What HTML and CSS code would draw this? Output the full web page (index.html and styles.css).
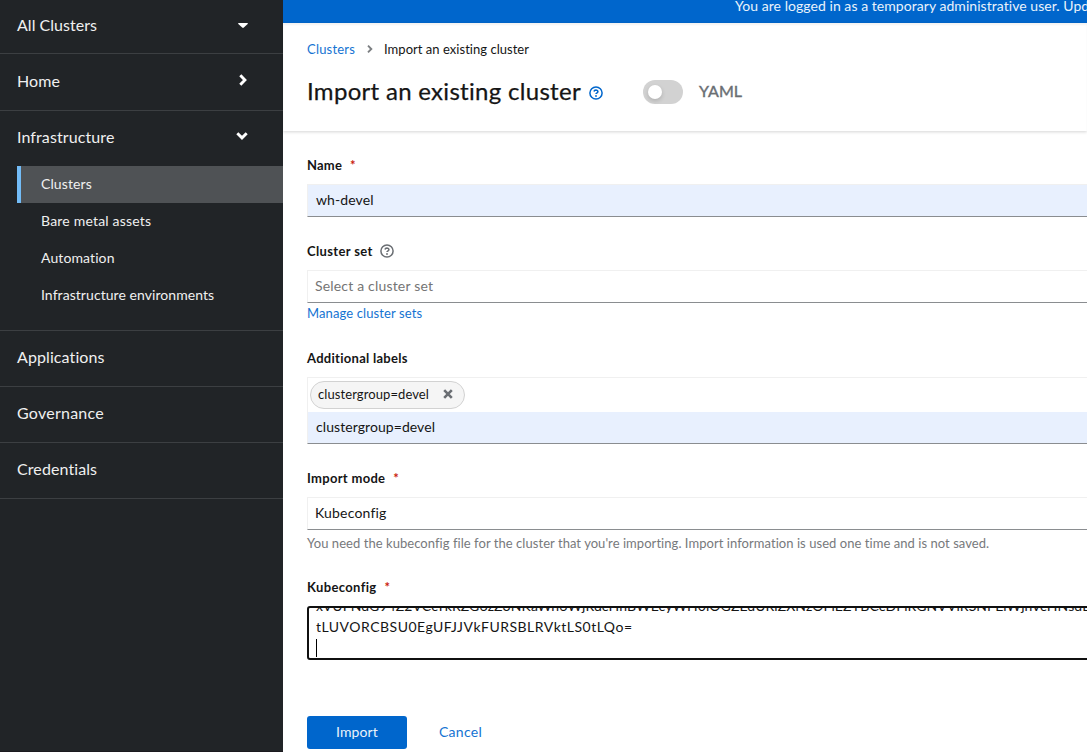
FILE: index.html
```html
<!DOCTYPE html>
<html lang="en">
<head>
<meta charset="utf-8">
<title>Import an existing cluster</title>
<link rel="stylesheet" href="styles.css">
</head>
<body>
<div class="page">
  <nav class="sidebar">
    <div class="nav-item switcher"><span>All Clusters</span>
      <svg class="icon" width="10" height="5" viewBox="0 0 10 5"><path d="M.7 0h8.6q.9.2.4.9L5.8 4.6q-.8.7-1.6 0L.3.9Q-.2.2.7 0z" fill="currentColor"/></svg>
    </div>
    <div class="nav-item home"><span>Home</span>
      <svg class="icon icon-right" width="8" height="12" viewBox="0 0 8 12"><path d="M1.3 1.3 5.9 6l-4.6 4.7" fill="none" stroke="currentColor" stroke-width="2.9"/></svg>
    </div>
    <div class="nav-group">
      <div class="nav-item nav-head"><span>Infrastructure</span>
        <svg class="icon icon-down" width="12" height="8" viewBox="0 0 12 8"><path d="M1.3 1.3 6 5.9l4.7-4.6" fill="none" stroke="currentColor" stroke-width="2.9"/></svg>
      </div>
      <a class="sub current">Clusters</a>
      <a class="sub s-bare">Bare metal assets</a>
      <a class="sub">Automation</a>
      <a class="sub s-env">Infrastructure environments</a>
    </div>
    <div class="nav-item">Applications</div>
    <div class="nav-item governance">Governance</div>
    <div class="nav-item">Credentials</div>
  </nav>
  <main class="main">
    <div class="banner"><span>You are logged in as a temporary administrative user. Update the cluster OAuth configuration to allow others to log in.</span></div>
    <header class="header">
      <div class="breadcrumb">
        <a class="link crumb">Clusters</a>
        <svg width="6" height="8" viewBox="0 0 6 8"><path d="M1 .7 4.3 4 1 7.3" fill="none" stroke="#7c7f82" stroke-width="1.9"/></svg>
        <span>Import an existing cluster</span>
      </div>
      <div class="title-row">
        <h1>Import an existing cluster</h1>
        <svg class="help help-blue" width="14" height="14" viewBox="0 0 14 14"><circle cx="7" cy="7" r="6.1" fill="none" stroke="currentColor" stroke-width="1.5"/><path d="M5 5.5Q5.3 4 7 4q1.9.1 1.9 1.6 0 1-1.1 1.5-.8.4-.8 1" fill="none" stroke="currentColor" stroke-width="1.6"/><circle cx="7" cy="10" r=".9" fill="currentColor"/></svg>
        <span class="switch"><span class="knob"></span></span>
        <span class="yaml">YAML</span>
      </div>
    </header>
    <form class="form">
      <div class="label">Name<span class="req">*</span></div>
      <div class="input filled">wh-devel</div>

      <div class="label label-set">Cluster set
        <svg class="help" width="14" height="14" viewBox="0 0 14 14"><circle cx="7" cy="7" r="6.1" fill="none" stroke="currentColor" stroke-width="1.5"/><path d="M5 5.5Q5.3 4 7 4q1.9.1 1.9 1.6 0 1-1.1 1.5-.8.4-.8 1" fill="none" stroke="currentColor" stroke-width="1.6"/><circle cx="7" cy="10" r=".9" fill="currentColor"/></svg>
      </div>
      <div class="input placeholder">Select a cluster set</div>
      <a class="link manage">Manage cluster sets</a>

      <div class="label label-additional">Additional labels</div>
      <div class="chips">
        <span class="chip">clustergroup=devel
          <svg width="10" height="10" viewBox="0 0 10 10"><path d="m1.2 1.2 7.6 7.6m0-7.6L1.2 8.8" stroke="#6a6e73" stroke-width="2.6"/></svg>
        </span>
        <div class="chip-input">clustergroup=devel</div>
      </div>

      <div class="label label-mode">Import mode<span class="req">*</span></div>
      <div class="input">Kubeconfig</div>
      <div class="helper">You need the kubeconfig file for the cluster that you're importing. Import information is used one time and is not saved.</div>

      <div class="label label-kube">Kubeconfig<span class="req">*</span></div>
      <div class="textarea">
        <div class="line line-top">xVUFNdG94Z2VCcTkRZG6zZ3NKaWn6WjRdcHhBWEcyWH0lOGZEdURlZXNzOFlEZYBCcDFlRGNVVlRSNFElWjhVcHNsdB</div>
        <div class="line line-key">tLUVORCBSU0EgUFJJVkFURSBLRVktLS0tLQo=</div>
        <div class="line"><span class="caret"></span></div>
      </div>
      <div class="actions">
        <a class="button">Import</a>
        <a class="link cancel">Cancel</a>
      </div>
    </form>
  </main>
</div>
</body>
</html>
```
FILE: styles.css
```css
* { box-sizing: border-box; }
body { margin: 0; overflow: hidden; font: 14px/21px Lato, "Liberation Sans", sans-serif; letter-spacing: .1px; color: #151515; }
.page { display: flex; width: 1087px; height: 752px; overflow: hidden; }
svg { flex: none; display: block; }

.sidebar { flex: 0 0 283px; background: #212427; color: #f0f0f0; border-bottom: 1px solid #1b1a1f; }
.nav-item { display: flex; align-items: center; justify-content: space-between; height: 56px; padding: 0 35px 4px 17px; font-size: 16px; border-bottom: 1px solid #3c3f42; }
.switcher { height: 54px; letter-spacing: .03px; }
.home { height: 57px; }
.governance { letter-spacing: .25px; }
.icon { color: #fff; }
.switcher .icon { margin-top: 1px; }
.icon-right { margin: 0 1px 0 0; }
.icon-down { margin: -2px 0 0; }
.nav-group { padding-bottom: 16px; border-bottom: 1px solid #3c3f42; }
.nav-head { height: 55px; border: 0; }
.sub { display: block; height: 37px; margin-left: 17px; padding-left: 24px; line-height: 35px; }
.current { padding-left: 20px; border-left: 4px solid #73bcf7; background: #4f5255; }
.s-bare { letter-spacing: .2px; }
.s-env { letter-spacing: .06px; }

.main { flex: 1; min-width: 0; background: #fff; }
.banner { height: 23px; padding-left: 452px; overflow: hidden; background: #06c; color: #e9f2fb; line-height: 11px; letter-spacing: .05px; white-space: nowrap; }
.header { height: 108px; padding: 16px 24px 0; box-shadow: 0 1px 3px rgba(3,3,3,.17), inset 0 2px 2px rgba(3,3,3,.05); }
.breadcrumb { display: flex; align-items: center; gap: 12px; height: 20px; font-size: 13px; letter-spacing: .03px; }
.link { color: #1473d2; }
.crumb { letter-spacing: .2px; }
.breadcrumb svg { margin-right: -1px; }
.title-row { display: flex; align-items: center; height: 32px; margin-top: 16px; padding-top: 2px; }
h1 { flex: 0 0 282px; margin: 0; padding-bottom: 2px; font: 400 24px/32px Lato, sans-serif; letter-spacing: .3px; -webkit-text-stroke: .25px #151515; white-space: nowrap; }
.help { flex: none; color: #6a6e73; }
.help-blue { margin-top: 2px; color: #06c; }
.switch { width: 40px; height: 24px; margin: 0 16px 0 40px; padding: 5px; border-radius: 12px; background: #d2d2d2; }
.knob { display: block; width: 14px; height: 14px; border-radius: 50%; background: #fff; box-shadow: 0 2px 4px rgba(3,3,3,.16); }
.yaml { padding-bottom: 3px; font-size: 16px; color: #6a6e73; -webkit-text-stroke: .4px #6a6e73; letter-spacing: .1px; }

.form { width: 840px; padding: 24px 0 0 24px; }
.label { display: flex; align-items: center; height: 21px; margin-bottom: 8px; font-size: 13px; font-weight: 700; letter-spacing: .2px; }
.req { margin-left: 8px; color: #c9190b; }
.label .help { margin: -1px 0 0 7px; }
.input { height: 33px; padding-left: 7px; border: 1px solid #f0f0f0; border-bottom-color: #8a8d90; line-height: 29px; letter-spacing: .18px; }
.filled { padding-left: 8px; background: #e8f0fe; letter-spacing: .1px; }
.placeholder { color: #757575; }
.label-set { margin-top: 24px; letter-spacing: .36px; }
.manage { display: block; height: 21px; font-size: 13px; letter-spacing: .11px; }
.label-additional { margin-top: 24px; letter-spacing: .28px; }
.chips { height: 67px; border: 1px solid #f0f0f0; border-bottom-color: #8a8d90; padding: 3px 0 0 2px; }
.chip { display: flex; align-items: center; justify-content: space-between; width: 155px; height: 28px; padding: 0 11px 1px 7px; border: 1px solid #d2d2d2; border-radius: 14px; background: #f5f5f5; font-size: 13px; letter-spacing: .09px; }
.chip svg { margin-top: -1px; }
.chip-input { height: 31px; margin: 3px 0 0 -2px; padding-left: 8px; background: #e8f0fe; line-height: 29px; letter-spacing: .07px; }
.label-mode { margin-top: 24px; letter-spacing: .3px; }
.helper { height: 22px; padding-top: 3px; color: #77797c; font-size: 13px; letter-spacing: .05px; white-space: nowrap; }
.label-kube { margin-top: 25px; letter-spacing: .37px; }
.textarea { height: 54px; border: 2px solid #101010; border-radius: 3px; padding-left: 7px; overflow: hidden; }
.line { height: 21px; white-space: nowrap; }
.line-top { margin-top: -13px; letter-spacing: .1px; }
.line-key { letter-spacing: .49px; }
.caret { display: block; width: 1px; height: 18px; margin-top: 2px; background: #000; }
.actions { display: flex; align-items: center; margin-top: 56px; }
.button { width: 100px; height: 33px; border-radius: 3px; background: #06c; color: #eaf3fb; line-height: 31px; text-align: center; }
.cancel { margin-left: 32px; padding-bottom: 2px; letter-spacing: .27px; }
```
